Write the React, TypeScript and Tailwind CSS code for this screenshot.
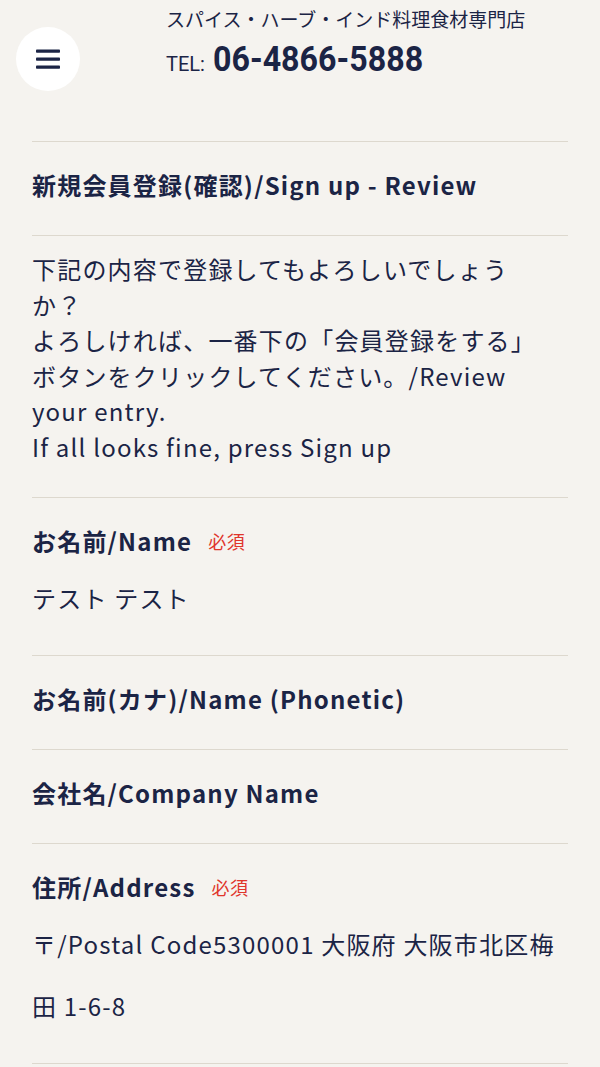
import React from 'react';

const jp = { fontFamily: '"Noto Sans CJK JP", "Noto Sans", sans-serif' };

function Required() {
  return <span className="ml-4 text-[18px] font-normal tracking-[0.03em] text-[#e0352b]">必須</span>;
}

function Field({ label, required, children }: { label: string; required?: boolean; children?: React.ReactNode }) {
  return (
    <section className={`border-t border-[#ddd8ce] pt-[25px] ${children ? 'pb-[26px]' : 'pb-[32px]'}`}>
      <h3 className="flex h-9 items-center text-[24px] font-bold leading-[36px] tracking-[0.05em]">
        {label}
        {required && <Required />}
      </h3>
      {children && <p className="mt-2 text-[24px] leading-[62px] tracking-[0.05em]">{children}</p>}
    </section>
  );
}

export default function App() {
  return (
    <div className="min-h-screen bg-[#f5f3ef] text-[#1b2445]" style={jp}>
      <header className="flex h-[141px] items-start">
        <div className="pl-4 pt-[27px]">
          <button className="flex h-16 w-16 items-center justify-center rounded-full bg-white">
            <svg width="26" height="22" viewBox="0 0 26 22">
              <rect x="1" y="1.5" width="24" height="3.2" rx="0.8" fill="#1b2445" />
              <rect x="1" y="9.5" width="24" height="3.2" rx="0.8" fill="#1b2445" />
              <rect x="1" y="17.5" width="24" height="3.2" rx="0.8" fill="#1b2445" />
            </svg>
          </button>
        </div>
        <div className="ml-[86px] pt-[7px]">
          <p className="text-[19px] leading-[24px]">スパイス・ハーブ・インド料理食材専門店</p>
          <p className="mt-[9px] flex items-baseline whitespace-nowrap" style={{ fontFamily: 'Roboto, "Noto Sans", sans-serif' }}>
            <span className="mr-2 text-[20px]">TEL:</span>
            <span className="inline-block origin-left scale-x-[0.92] text-[35px] font-bold leading-[40px]">06-4866-5888</span>
          </p>
        </div>
      </header>

      <main className="px-8">
        <Field label="新規会員登録(確認)/Sign up - Review" />
        <section className="border-t border-[#ddd8ce] pt-[15px] pb-[32px]">
          <p className="text-[24px] leading-[35.6px] tracking-[0.05em]">
            下記の内容で登録してもよろしいでしょう
            <br />
            か？
            <br />
            よろしければ、一番下の「会員登録をする」
            <br />
            ボタンをクリックしてください。/Review
            <br />
            your entry.
            <br />
            If all looks fine, press Sign up
          </p>
        </section>
        <Field label="お名前/Name" required>
          テスト テスト
        </Field>
        <Field label="お名前(カナ)/Name (Phonetic)" />
        <Field label="会社名/Company Name" />
        <Field label="住所/Address" required>
          〒/Postal Code5300001 大阪府 大阪市北区梅
          <br />田 1-6-8
        </Field>
        <div className="border-t border-[#ddd8ce]" />
      </main>
    </div>
  );
}
